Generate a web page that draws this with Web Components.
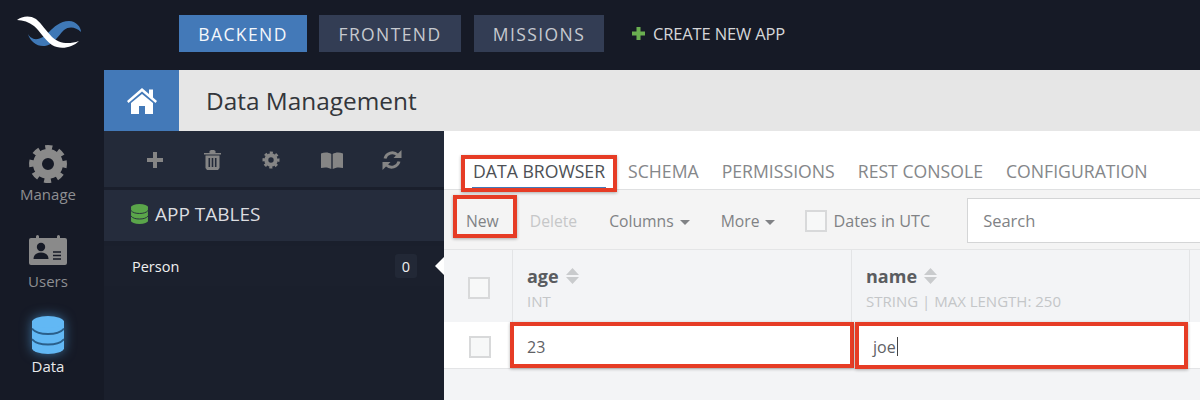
<!DOCTYPE html>
<html>
<head>
<meta charset="utf-8">
<title>Data Management</title>
<style>
  html, body { margin: 0; height: 100%; overflow: hidden; }
  body { font-family: "Open Sans", "Liberation Sans", sans-serif; background: #161a26; }
</style>
</head>
<body>
<app-shell>
  <top-bar slot="top"></top-bar>
  <nav-rail slot="rail"></nav-rail>
  <page-header slot="header" title-text="Data Management"></page-header>
  <table-sidebar slot="side"></table-sidebar>
  <data-browser slot="main"></data-browser>
</app-shell>

<script>
// shared icons
const GEAR = (color) => `<svg viewBox="0 0 40 40" width="100%" height="100%"><circle cx="20" cy="20" r="16" fill="none" stroke="${color}" stroke-width="6" stroke-dasharray="6.6 5.97" transform="rotate(-11 20 20)"/><circle cx="20" cy="20" r="10.5" fill="none" stroke="${color}" stroke-width="9"/></svg>`;
const DB = (color, bg) => `<svg viewBox="0 0 32 38" width="100%" height="100%"><rect x="0" y="5" width="32" height="28" fill="${color}"/><ellipse cx="16" cy="6" rx="16" ry="6" fill="${color}"/><ellipse cx="16" cy="32" rx="16" ry="6" fill="${color}"/><path d="M0 12.5c3 4 9 5.5 16 5.5s13-1.500 16-5.500M0 23c3 4 9 5.500 16 5.500s13-1.500 16-5.500" fill="none" stroke="${bg}" stroke-width="1.800"/></svg>`;

function define(name, css, html) {
  customElements.define(name, class extends HTMLElement {
    constructor() {
      super();
      const shadow = this.attachShadow({ mode: 'open' });
      shadow.innerHTML = `<style>${css}</style>${typeof html === 'function' ? html(this) : html}`;
    }
  });
}

define('app-shell', `
  :host { display: grid; width: 1200px; height: 400px; grid-template: 70px 61px 1fr / 104px 340px 1fr; background: #161a26; overflow: hidden; }
  .top { grid-column: 1 / 4; grid-row: 1; }
  .rail { grid-column: 1; grid-row: 2 / 4; min-height: 0; }
  .header { grid-column: 2 / 4; grid-row: 2; }
  .side { grid-column: 2; grid-row: 3; min-height: 0; }
  .main { grid-column: 3; grid-row: 3; min-height: 0; }
`, `
  <div class="top"><slot name="top"></slot></div>
  <div class="rail"><slot name="rail"></slot></div>
  <div class="header"><slot name="header"></slot></div>
  <div class="side"><slot name="side"></slot></div>
  <div class="main"><slot name="main"></slot></div>
`);

define('top-bar', `
  :host { display: flex; height: 70px; align-items: flex-start; background: #161a26; }
  .logo { width: 179px; height: 70px; flex: none; }
  .tab { height: 37px; margin-top: 15px; display: flex; align-items: center; justify-content: center; background: #333d54; color: #c6c9cf; font-size: 17.500px; letter-spacing: 1.400px; }
  .tab.on { background: #4379b8; color: #f4f7fb; }
  .create { display: flex; align-items: center; height: 37px; margin: 15px 0 0 27px; color: #d5d6d9; font-size: 16.500px; letter-spacing: -.15px; }
  .create svg { width: 15px; height: 15px; margin-right: 7px; }
`, `
  <svg class="logo" viewBox="0 0 179 70">
    <path fill="#3f78b6" d="M28 34C30 41 37 47 45 46 53 45 58 36 64 30 69 26 76 27 81 32 81 27 76 21 69 21 60 21 54 27 49 32 45 36 40 40 34 39 31 38 29 36 28 34Z"/>
    <path fill="#fff" d="M17 20C22 16 30 15 36 19 42 24 46 31 52 37 58 43 68 45 79 41 72 48 60 50 52 45 44 39 40 31 34 26 29 22 23 20 17 20Z"/>
  </svg>
  <div class="tab on" style="width:128px">BACKEND</div>
  <div class="tab" style="width:142px;margin-left:12px">FRONTEND</div>
  <div class="tab" style="width:130px;margin-left:13px">MISSIONS</div>
  <div class="create">
    <svg viewBox="0 0 15 15"><path fill="#6aaf50" d="M5.500 1h4v4.500H14v4H9.500V14h-4V9.500H1v-4h4.500z"/></svg>
    CREATE NEW APP
  </div>
`);

define('rail-item', `
  :host { display: flex; flex-direction: column; align-items: center; color: #8e8f92; font-size: 15px; line-height: 19px; }
  :host([active]) { color: #e8e9eb; }
  .icon { display: flex; align-items: center; justify-content: center; }
`, `<div class="icon"><slot name="icon"></slot></div><slot></slot>`);

define('nav-rail', `
  :host { display: block; height: 330px; background: #161a26; box-sizing: border-box; padding: 74px 8px 0 0; }
  rail-item { height: 80px; }
  .gear { width: 40px; height: 40px; display: block; margin-bottom: 1px; }
  .card { width: 38px; height: 30px; margin: 1px 0 7px; display: block; }
  .db { width: 32px; height: 38px; margin: 2px 0 3px; display: block; filter: drop-shadow(0 0 6px rgba(90,180,250,.55)); }
`, `
  <rail-item style="height:90px"><span slot="icon" class="gear">${GEAR('#8a8a8a')}</span>Manage</rail-item>
  <rail-item>
    <svg slot="icon" class="card" viewBox="0 0 38 30">
      <path fill="#8a8a8a" d="M2 3h5V1.500a1.500 1.500 0 0 1 3 0V3h18V1.500a1.500 1.500 0 0 1 3 0V3h5a2 2 0 0 1 2 2v23a2 2 0 0 1-2 2H2a2 2 0 0 1-2-2V5a2 2 0 0 1 2-2z"/>
      <circle cx="12" cy="12" r="4.200" fill="#161a26"/>
      <path fill="#161a26" d="M4.500 24c0-4 3-6.500 7.500-6.500s7.500 2.500 7.500 6.500z"/>
      <path stroke="#161a26" stroke-width="1.400" d="M24 17h8M24 20.500h8M24 24h8"/>
    </svg>
    Users
  </rail-item>
  <rail-item active><span slot="icon" class="db">${DB('#62b8f4', '#2a5f8a')}</span>Data</rail-item>
`);

define('page-header', `
  :host { display: flex; height: 61px; background: #e6e6e6; }
  .home { width: 75px; flex: none; background: #4379b8; display: flex; align-items: center; justify-content: center; }
  .home svg { width: 30px; height: 26px; }
  h1 { margin: 0 0 0 27px; font-weight: 400; font-size: 24.400px; line-height: 61px; color: #33363b; }
`, (el) => `
  <div class="home">
    <svg viewBox="0 0 30 26"><path fill="#fff" d="M15 0 22 6V1.500h4V9.500L30 13 28.500 15 15 3.500 1.500 15 0 13ZM15 6 26 15V26H18V18H12V26H4V15Z"/></svg>
  </div>
  <h1>${el.getAttribute('title-text')}</h1>
`);

define('table-sidebar', `
  :host { display: block; height: 269px; background: #1a1f2c; color: #f0f0f0; }
  .tools { padding-top: 2px; height: 54px; background: #232a39; display: flex; align-items: center; border-bottom: 2px solid #1a1f2c; }
  .tools span { display: block; flex: none; }
  .tools svg { display: block; width: 100%; height: 100%; }
  .title { margin-top: 1px; height: 48px; padding-bottom: 3px; background: #252c3c; display: flex; align-items: center; padding-left: 27px; font-size: 19px; color: #dcdde0; }
  .title span { width: 17px; height: 20px; margin-right: 7px; display: block; }
  .row { margin-top: 5px; height: 40px; display: flex; align-items: center; position: relative; padding-left: 28px; font-size: 14.500px; background: #1b202d; }
  .count { position: absolute; left: 291px; top: 8px; width: 22px; height: 24px; background: #222836; border-radius: 3px; display: flex; align-items: center; justify-content: center; }
  .tip { position: absolute; right: 0; top: 11px; width: 0; height: 0; border: 9px solid transparent; border-right: 9px solid #fff; border-left: 0; }
`, `
  <div class="tools">
    <span style="width:18px;height:18px;margin-left:42px"><svg viewBox="0 0 18 18"><path fill="#858585" d="M7 1h4v6h6v4h-6v6H7v-6H1V7h6z"/></svg></span>
    <span style="width:17px;height:20px;margin-left:40px"><svg viewBox="0 0 17 20"><path fill="#858585" d="M0 3h5.500V1L7 0h3l1.500 1v2H17v1.500H0zM1.500 5.500h14V18l-1.500 2H3l-1.500-2zM4.500 8v9h1.600V8zm3.200 0v9h1.600V8zm3.200 0v9h1.600V8z" fill-rule="evenodd"/></svg></span>
    <span style="width:18px;height:18px;margin-left:41px">${GEAR('#858585')}</span>
    <span style="width:22px;height:17px;margin-left:41px"><svg viewBox="0 0 22 17"><path fill="#858585" d="M0 1.500C3.500 0 7.500 0 10.300 2V17C7.500 15.200 3.500 15 0 16zM22 1.500C18.500 0 14.500 0 11.700 2V17C14.500 15.200 18.500 15 22 16z"/></svg></span>
    <span style="width:20px;height:20px;margin-left:39px"><svg viewBox="0 0 20 20"><path fill="none" stroke="#858585" stroke-width="3" d="M3 8.500A7.500 7.500 0 0 1 15.500 5M17 11.500A7.500 7.500 0 0 1 4.500 15"/><path fill="#858585" d="M19.500 0v8h-8zM.5 20v-8h8z"/></svg></span>
  </div>
  <div class="title"><span>${DB('#5aa54a', '#252c3c')}</span>APP TABLES</div>
  <div class="row">Person<div class="count">0</div><div class="tip"></div></div>
`);

define('check-box', `
  :host { display: block; width: 22px; height: 22px; box-sizing: border-box; background: #f7f8f8; border: 2px solid #d8d9da; flex: none; }
`, ``);

define('sort-caret', `
  :host { display: inline-block; width: 13px; height: 16px; vertical-align: -1px; margin-left: 7px; }
  svg { display: block; }
`, `<svg viewBox="0 0 13 16" width="13" height="16"><path fill="#c9cbcd" d="M6.500 0 13 7H0zM0 9h13L6.500 16z"/></svg>`);

define('grid-column', `
  :host { display: block; height: 72px; box-sizing: border-box; border-right: 1px solid #e3e4e6; padding: 12px 0 0 14px; }
  .name { font-size: 18px; font-weight: 700; color: #5a5c60; line-height: 28px; }
  .type { font-size: 15px; color: #c4c6c8; line-height: 20px; margin-top: 1px; }
`, (el) => `
  <div class="name">${el.getAttribute('name')}<sort-caret></sort-caret></div>
  <div class="type">${el.getAttribute('type')}</div>
`);

define('red-mark', `
  :host { position: absolute; box-sizing: border-box; border: 4px solid #e63c25; box-shadow: 0 1px 3px rgba(0,0,0,.3); pointer-events: none; }
`, ``);

define('data-browser', `
  :host { display: block; position: relative; height: 269px; background: #f3f4f6; color: #66686c; overflow: hidden; }
  .tabs { height: 59px; background: #fff; border-bottom: 1px solid #dfe0e1; box-sizing: border-box; display: flex; padding-left: 28px; gap: 21px; font-size: 17.650px; color: #85878a; }
  .tabs div { height: 59px; box-sizing: border-box; padding: 27px 1px 0; line-height: 26px; }
  .tabs .on { color: #4d5055; border-bottom: 3px solid #4379b8; }
  .bar { height: 60px; background: #f4f4f4; border-bottom: 1px solid #e4e5e6; box-sizing: border-box; padding-top: 2px; display: flex; align-items: center; font-size: 15.700px; color: #808285; }
  .bar > span { flex: none; }
  .bar .off { color: #c6c7c8; }
  .bar i { display: inline-block; border: 5px solid transparent; border-top: 5px solid #808285; border-bottom: 0; margin-left: 6px; vertical-align: 2px; }
  .search { flex: none; margin-left: 37px; width: 300px; height: 45px; box-sizing: border-box; background: #fff; border: 1px solid #d4d5d6; padding: 0 15px; line-height: 43px; color: #808285; font-size: 16.500px; }
  .cols { display: grid; grid-template-columns: 69px 339px 338px 1fr; height: 72px; }
  .cell0 { border-right: 1px solid #e3e4e6; display: flex; align-items: center; justify-content: center; box-sizing: border-box; padding: 3px 0 0 2px; }
  .row { display: grid; grid-template-columns: 69px 339px 338px 1fr; height: 47px; padding-top: 3px; background: #fff; border-bottom: 1px solid #e3e4e6; box-sizing: border-box; font-size: 16px; color: #5f6165; }
  .row > div { display: flex; align-items: center; }
  .row .first { justify-content: center; padding-left: 2px; }
  .row .v { padding-left: 14px; }
  .caret { display: inline-block; width: 1px; height: 19px; background: #444; margin-left: 1px; }
`, `
  <div class="tabs">
    <div class="on">DATA BROWSER</div><div>SCHEMA</div><div>PERMISSIONS</div><div>REST CONSOLE</div><div>CONFIGURATION</div>
  </div>
  <div class="bar">
    <span style="margin-left:22px">New</span>
    <span class="off" style="margin-left:31px">Delete</span>
    <span style="margin-left:32px">Columns<i></i></span>
    <span style="margin-left:31px">More<i></i></span>
    <check-box style="margin-left:30px"></check-box>
    <span style="margin-left:6px;font-size:16.200px">Dates in UTC</span>
    <div class="search">Search</div>
  </div>
  <div class="cols">
    <div class="cell0"><check-box></check-box></div>
    <grid-column name="age" type="INT"></grid-column>
    <grid-column name="name" type="STRING | MAX LENGTH: 250"></grid-column>
  </div>
  <div class="row">
    <div class="first"><check-box></check-box></div>
    <div class="v">23</div>
    <div class="v" style="padding-left:21px">joe<span class="caret"></span></div>
    <div></div>
  </div>
  <red-mark style="left:17px;top:24px;width:156px;height:37px"></red-mark>
  <red-mark style="left:9px;top:64px;width:64px;height:43px"></red-mark>
  <red-mark style="left:66px;top:191px;width:344px;height:46px"></red-mark>
  <red-mark style="left:411px;top:191px;width:333px;height:47px"></red-mark>
`);
</script>
</body>
</html>
